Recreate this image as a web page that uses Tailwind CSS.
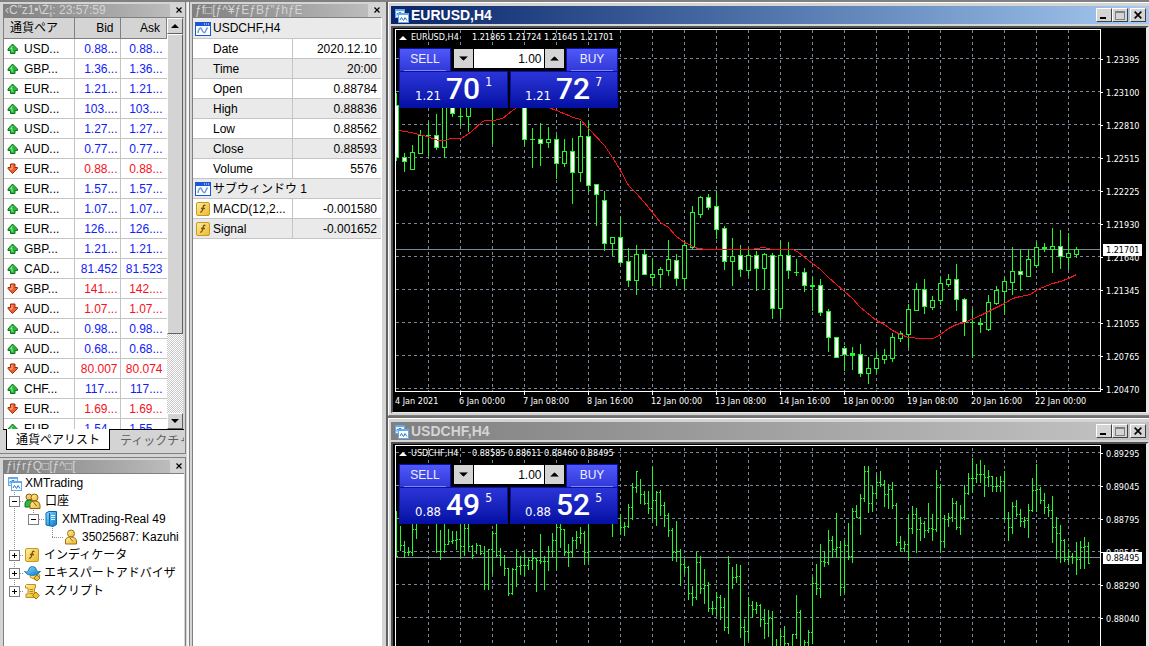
<!DOCTYPE html>
<html lang="ja">
<head>
<meta charset="utf-8">
<title>XMTrading</title>
<script src="https://cdn.jsdelivr.net/npm/@tailwindcss/browser@4"></script>
</head>
<body class="flex h-screen overflow-hidden bg-[#d4d4d4] border-t-2 border-[#808080] font-['Liberation_Sans','Noto_Sans_CJK_JP',sans-serif] text-[12px] leading-[20px] text-black">

<svg class="absolute h-0 w-0">
  <defs>
    <linearGradient id="gold" x1="0" y1="0" x2="1" y2="1"><stop offset="0" stop-color="#fff0a0"/><stop offset="1" stop-color="#e8b830"/></linearGradient>
    <linearGradient id="sky" x1="0" y1="0" x2="1" y2="1"><stop offset="0" stop-color="#8cdcff"/><stop offset="1" stop-color="#0878c8"/></linearGradient>
    <symbol id="up" viewBox="0 0 12 12"><path d="M5.5 1 L10.5 6 V7.5 H8 V10.5 H3.5 V7.5 H1 V6 Z" fill="#28b838" stroke="#107020"/><path d="M5.5 3 L3.5 5.5 H5 V9" fill="none" stroke="#90f098"/></symbol>
    <symbol id="down" viewBox="0 0 12 12"><path d="M5.5 10.5 L10.5 5.5 V4.5 H8 V1 H3.5 V4.5 H1 V5.5 Z" fill="#f06030" stroke="#a02808"/><path d="M5 2 V6 H3" fill="none" stroke="#ffb890"/></symbol>
    <symbol id="wave" viewBox="0 0 16 14"><rect x=".5" y=".5" width="15" height="13" fill="#fff" stroke="#1858d8"/><rect x="1" y="1" width="14" height="3" fill="#1858d8"/><path d="M9 2h1M11 2h1M13 2h1" stroke="#fff"/><path d="M3 11 C4 5 6 5 7 8 S10 12 11 8 L12.500 5.500" fill="none" stroke="#7098d8" stroke-width="1.500"/></symbol>
    <symbol id="func" viewBox="0 0 14 14"><rect x=".5" y=".5" width="13" height="13" rx="1.500" fill="url(#gold)" stroke="#c89820"/><path d="M9.500 3.500 C7.500 2.500 7.200 4.500 7 6 S6.400 10.500 4 10.200 M5 6.500 H9" fill="none" stroke="#805008" stroke-width="1.300"/></symbol>
    <symbol id="charts" viewBox="0 0 15 15"><rect x="1.500" y="1.500" width="9" height="8" fill="#e8f4ff" stroke="#68a8e8"/><path d="M1 2.500H11" stroke="#68a8e8"/><path d="M3 7.500V5.500H5V4.500H7V6.500H9" fill="none" stroke="#3888d8"/><rect x="4.500" y="5.500" width="10" height="9" fill="#fff" stroke="#68a8e8"/><path d="M4 6.500H15" stroke="#68a8e8"/><path d="M6 12 L7.500 9.500 L9.500 12.500 L11 9.500 L13 12.500" fill="none" stroke="#2878c8"/></symbol>
    <symbol id="users" viewBox="0 0 16 16"><circle cx="4.500" cy="4" r="3" fill="#f8c870" stroke="#906010"/><path d="M.5 14 V10 Q1 7 5 7 L8 8 V14 Z" fill="#30b840" stroke="#107820"/><circle cx="10" cy="4.500" r="3.500" fill="url(#gold)" stroke="#906010"/><path d="M5.500 15.500 V11 Q6 8 10.500 8 Q15 8 15.500 12 V15.500 Z" fill="url(#gold)" stroke="#906010"/><path d="M9 9 L12 13" stroke="#906010"/></symbol>
    <symbol id="user" viewBox="0 0 14 16"><circle cx="7" cy="4.500" r="3.500" fill="url(#gold)" stroke="#a07010"/><path d="M1.500 15 V11 Q2 8 7 8 Q12 8 12.500 12 V15 Z" fill="url(#gold)" stroke="#a07010"/><path d="M6 9 L9 12.500" stroke="#a07010"/></symbol>
    <symbol id="server" viewBox="0 0 12 16"><path d="M1 2 L4 .5 H11.500 V13.500 L8 15.500 L1 14 Z" fill="url(#sky)" stroke="#0868b0"/><path d="M4.500 2 V14.500" stroke="#0868b0"/><path d="M6 4.500H10M6 6.500H10M6 8.500H10" stroke="#e0f8ff"/></symbol>
    <symbol id="hat" viewBox="0 0 17 15"><path d="M7 8 L14 7 L16 10 L12 14 L6 11 Z" fill="url(#gold)" stroke="#c09020"/><path d="M.5 5.500 Q4 7 4.500 4 Q5 .5 8.500 .5 Q12 .5 12.500 4 Q13 6.500 16.500 5.500 Q14 9.500 8.500 9.500 Q3 9.500 .5 5.500Z" fill="url(#sky)" stroke="#2080b8"/><path d="M13 9 L16 12 L13 15 L10 12Z" fill="#f0c030" stroke="#a07810"/></symbol>
    <symbol id="scroll" viewBox="0 0 16 15"><path d="M2.500 .5 H11.500 V4 H10.500 V10 H12 V13.500 H2 V10 H4 V4 H1.500 V1.500Z" fill="url(#gold)" stroke="#c09020"/><path d="M5.500 5.500H9M5.500 7.500H9M5.500 9.500H9" stroke="#b88818"/><path d="M12 8 L15.500 11.500 L12 15 L8.500 11.500Z" fill="#f0c030" stroke="#a07810"/></symbol>
    <symbol id="plus" viewBox="0 0 11 11"><rect x=".5" y=".5" width="10" height="10" fill="#fff" stroke="#808080"/><path d="M3 5.500H8M5.500 3V8" stroke="#000"/></symbol>
    <symbol id="minus" viewBox="0 0 11 11"><rect x=".5" y=".5" width="10" height="10" fill="#fff" stroke="#808080"/><path d="M3 5.500H8" stroke="#000"/></symbol>
    <symbol id="x" viewBox="0 0 6 6"><path d="M.5 .5L5.500 5.500M5.500 .5L.5 5.500" stroke="#000" stroke-width="1.200"/></symbol>
    <symbol id="tu" viewBox="0 0 8 4"><path d="M0 4L4 0L8 4Z" fill="currentColor"/></symbol>
    <symbol id="td" viewBox="0 0 8 4"><path d="M0 0L4 4L8 0Z" fill="currentColor"/></symbol>
  </defs>
</svg>

<aside class="flex w-[189px] shrink-0 flex-col overflow-hidden border-r-2 border-white border-r-[#f4f4f4]">
  <section class="flex w-[186px] shrink-0 flex-col border-r border-b border-[#808080] pt-px pr-px pl-[3px]">
    <header class="flex h-[14px] items-center">
      <h2 class="h-[13px] w-[167px] overflow-hidden whitespace-nowrap bg-linear-to-r from-[#808080] to-[#bcbcbc] pl-[2px] leading-[13px] text-[#d4d4d4]">‹C”z1•\Ž¦: 23:57:59</h2>
      <button aria-label="閉じる" class="mr-px ml-auto flex h-3 w-2 items-center justify-center"><svg class="h-[6px] w-[6px]"><use href="#x"/></svg></button>
    </header>
    <div class="flex h-[412px] overflow-hidden border-t border-l border-[#808080] pr-px">
      <div class="min-w-0 flex-1 overflow-hidden bg-white">
        <table class="w-full table-fixed border-collapse">
          <thead><tr class="h-[20px] bg-[#d4d4d4]">
            <th class="h-[20px] w-[70px] border-r border-b border-[#808080] pt-[2px] pl-[6px] text-left font-normal whitespace-nowrap leading-[17px]">通貨ペア</th>
            <th class="w-[46px] border-r border-b border-[#808080] pt-[2px] pr-[6px] text-right font-normal leading-[17px]">Bid</th>
            <th class="border-r border-b border-[#808080] pt-[2px] pr-[6px] text-right font-normal leading-[17px]">Ask</th>
          </tr></thead>
          <tbody id="quotes"></tbody>
        </table>
      </div>
      <div class="flex w-[16px] flex-col bg-[repeating-conic-gradient(#fff_0_25%,#c8c8c8_0_50%)] bg-[length:2px_2px]">
        <button aria-label="上へ" class="flex h-[16px] shrink-0 items-center justify-center border border-t-white border-r-[#606060] border-b-[#606060] border-l-white bg-[#d4d4d4]"><svg class="h-[4px] w-[8px]"><use href="#tu"/></svg></button>
        <div class="h-[300px] border border-t-white border-r-[#606060] border-b-[#606060] border-l-white bg-[#d4d4d4]"></div>
        <button aria-label="下へ" class="mt-auto flex h-[16px] shrink-0 items-center justify-center border border-t-white border-r-[#606060] border-b-[#606060] border-l-white bg-[#d4d4d4]"><svg class="h-[4px] w-[8px]"><use href="#td"/></svg></button>
      </div>
    </div>
    <nav class="flex h-[24px] overflow-hidden">
      <div class="w-[3px] border-t border-black"></div>
      <button class="h-[21px] w-[104px] shrink-0 border border-t-0 border-black bg-white pt-[2px] leading-[18px] whitespace-nowrap">通貨ペアリスト</button>
      <button class="h-[21px] flex-1 overflow-hidden border-t border-black pt-px pl-[10px] text-left leading-[18px] whitespace-nowrap text-[#606060]">ティックチャート</button>
    </nav>
  </section>
  <section class="mt-[3px] flex w-[186px] flex-1 flex-col border-t border-r border-[#808080] pt-px pr-px pl-[3px]">
    <header class="flex h-[14px] items-center">
      <h2 class="h-[13px] w-[167px] overflow-hidden whitespace-nowrap bg-linear-to-r from-[#808080] to-[#bcbcbc] pl-[3px] leading-[13px] text-[#d4d4d4]">ƒiƒrƒQ□[ƒ^□[</h2>
      <button aria-label="閉じる" class="mr-px ml-auto flex h-3 w-2 items-center justify-center"><svg class="h-[6px] w-[6px]"><use href="#x"/></svg></button>
    </header>
    <div class="relative flex-1 overflow-hidden border-t border-l border-[#808080] bg-white leading-[18px] whitespace-nowrap">
      <svg class="absolute top-0 left-0 h-[130px] w-[80px]" shape-rendering="crispEdges"><path d="M10.500 18V117M10 27.500H20M29.500 36V45M29 45.500H40M48.500 54V63M48 63.500H60M10 81.500H20M10 99.500H20M10 117.500H20" fill="none" stroke="#909090" stroke-dasharray="1 1"/></svg>
      <ul class="relative">
        <li class="flex h-[18px] items-center gap-[3px] pl-[3px]"><svg class="h-[15px] w-[15px]"><use href="#charts"/></svg>XMTrading</li>
        <li class="flex h-[18px] items-center pl-[5px]"><svg class="h-[11px] w-[11px]"><use href="#minus"/></svg><svg class="mr-[4px] ml-[4px] h-[16px] w-[17px]"><use href="#users"/></svg>口座</li>
        <li class="flex h-[18px] items-center pl-[24px]"><svg class="h-[11px] w-[11px]"><use href="#minus"/></svg><svg class="mr-[5px] ml-[6px] h-[16px] w-[12px]"><use href="#server"/></svg>XMTrading-Real 49</li>
        <li class="flex h-[18px] items-center gap-[4px] pl-[60px]"><svg class="h-[16px] w-[14px] shrink-0"><use href="#user"/></svg>35025687: Kazuhi</li>
        <li class="flex h-[18px] items-center pl-[5px]"><svg class="h-[11px] w-[11px]"><use href="#plus"/></svg><svg class="mr-[5px] ml-[5px] h-[14px] w-[14px]"><use href="#func"/></svg>インディケータ</li>
        <li class="flex h-[18px] items-center pl-[5px]"><svg class="h-[11px] w-[11px] shrink-0"><use href="#plus"/></svg><svg class="mr-[3px] ml-[4px] h-[15px] w-[17px] shrink-0"><use href="#hat"/></svg>エキスパートアドバイザ</li>
        <li class="flex h-[18px] items-center pl-[5px]"><svg class="h-[11px] w-[11px]"><use href="#plus"/></svg><svg class="mr-[4px] ml-[4px] h-[15px] w-[16px]"><use href="#scroll"/></svg>スクリプト</li>
      </ul>
    </div>
  </section>
</aside>

<section class="flex w-[197px] shrink-0 flex-col border-l border-[#808080] pt-px pr-[2px] pl-[2px]">
  <header class="flex h-[14px] items-center">
    <h2 class="h-[13px] w-[176px] overflow-hidden whitespace-nowrap bg-linear-to-r from-[#808080] to-[#bcbcbc] pl-[3px] leading-[13px] text-[#d4d4d4]">ƒf□[ƒ^¥ƒEƒBƒ”ƒhƒE</h2>
    <button aria-label="閉じる" class="mr-[3px] ml-auto flex h-3 w-2 items-center justify-center"><svg class="h-[6px] w-[6px]"><use href="#x"/></svg></button>
  </header>
  <div class="mr-[2px] flex-1 overflow-hidden border-t border-l border-[#808080] border-r border-r-white bg-white">
    <table class="w-full table-fixed border-collapse">
      <colgroup><col class="w-[99px]"><col></colgroup>
      <tbody id="values"></tbody>
    </table>
  </div>
</section>

<main id="desk" class="flex min-w-0 flex-1 flex-col gap-[2px] overflow-hidden border-l-2 border-[#606060] bg-[#707070]"></main>

<template id="win">
  <article class="flex shrink-0 flex-col border border-t-white border-r-0 border-b-[#808080] border-l-white bg-[#d4d4d4] pt-[3px] pb-[2px] pl-[2px]">
    <header class="mb-[2px] flex h-[18px] items-center pr-[3px] pl-[3px]" data-bar>
      <svg class="mr-[2px] h-[15px] w-[15px]"><use href="#charts"/></svg>
      <h1 class="text-[14px] font-bold leading-[18px]" data-title></h1>
      <button aria-label="最小化" class="ml-auto flex h-[14px] w-[16px] items-end border border-t-white border-r-[#404040] border-b-[#404040] border-l-white bg-[#d4d4d4] pb-[2px] pl-[3px]"><span class="h-[2px] w-[6px] bg-black"></span></button>
      <button aria-label="最大化" class="flex h-[14px] w-[16px] items-center justify-center border border-t-white border-r-[#404040] border-b-[#404040] border-l-white bg-[#d4d4d4]"><span class="h-[9px] w-[10px] border border-t-2 border-[#808080]"></span></button>
      <button aria-label="閉じる" class="ml-[2px] flex h-[14px] w-[16px] items-center justify-center border border-t-white border-r-[#404040] border-b-[#404040] border-l-white bg-[#d4d4d4]"><svg class="h-[8px] w-[8px]"><use href="#x"/></svg></button>
    </header>
    <div class="flex border-t-2 border-r-3 border-b border-l-2 border-t-[#505050] border-r-[#e8e8e8] border-b-[#e8e8e8] border-l-[#505050] bg-black pt-px pl-[2px] font-['DejaVu_Sans_Condensed','Liberation_Sans',sans-serif] text-[9px] text-white">
      <div class="min-w-0 flex-1">
        <div class="relative h-[363px] overflow-hidden border border-white">
          <svg class="block h-[361px] w-full" preserveAspectRatio="xMinYMin slice" shape-rendering="crispEdges" data-plot></svg>
          <p class="absolute top-[2px] left-[3px] flex items-center leading-[11px] whitespace-nowrap"><svg class="mr-[4px] h-[4px] w-[8px]"><use href="#tu"/></svg><span class="w-[61px]" data-name></span><span data-ohlc></span></p>
          <form class="absolute top-[18px] left-[3px] w-[219px] bg-black font-['Liberation_Sans',sans-serif] text-[12px]">
            <div class="flex h-[23px] justify-between">
              <button type="button" class="w-[52px] border border-b-0 border-[#0810a8] bg-linear-to-b from-[#5058f8] to-[#3038d8] px-[4px] text-[#f0f0ff]"><span class="block border-b border-[#8088ff] leading-[21px]">SELL</span></button>
              <div class="flex gap-px py-[1px]">
                <button type="button" aria-label="減らす" class="flex h-[19px] w-[19px] items-center justify-center bg-[#d4d4d4] text-black"><svg class="h-[5px] w-[9px]" viewBox="0 0 8 4"><use href="#td"/></svg></button>
                <input aria-label="数量" value="1.00" class="h-[19px] w-[70px] bg-white pr-[2px] text-right text-[12px] text-black outline-none">
                <button type="button" aria-label="増やす" class="flex h-[19px] w-[19px] items-center justify-center bg-[#d4d4d4] text-black"><svg class="h-[5px] w-[9px]" viewBox="0 0 8 4"><use href="#tu"/></svg></button>
              </div>
              <button type="button" class="w-[52px] border border-b-0 border-[#0810a8] bg-linear-to-b from-[#5058f8] to-[#3038d8] px-[4px] text-[#f0f0ff]"><span class="block border-b border-[#8088ff] leading-[21px]">BUY</span></button>
            </div>
            <div class="flex h-[37px] gap-[2px] font-['DejaVu_Sans_Condensed','Liberation_Sans',sans-serif]">
              <div class="flex flex-1 items-end border border-[#0810a8] bg-linear-to-b from-[#2c34d8] to-[#0410a4] pl-[15px] text-[13px]" data-sell></div>
              <div class="flex flex-1 items-end border border-[#0810a8] bg-linear-to-b from-[#2c34d8] to-[#0410a4] pl-[14px] text-[13px]" data-buy></div>
            </div>
          </form>
        </div>
        <ol class="flex h-[20px] overflow-hidden leading-[18px] whitespace-nowrap" data-dates></ol>
      </div>
      <div class="relative w-[45px] shrink-0 overflow-hidden">
        <ol class="absolute inset-x-0" data-prices></ol>
        <output class="absolute left-[2px] h-[12px] w-[39px] bg-white pl-[3px] leading-[12px] text-black" data-now></output>
      </div>
    </div>
  </article>
</template>

<script>
const quotes = `u USD 0.88... 0.88...|u GBP 1.36... 1.36...|u EUR 1.21... 1.21...|u USD 103.... 103....|u USD 1.27... 1.27...|u AUD 0.77... 0.77...|d EUR 0.88... 0.88...|u EUR 1.57... 1.57...|u EUR 1.07... 1.07...|u EUR 126.... 126....|u GBP 1.21... 1.21...|u CAD 81.452 81.523|d GBP 141.... 142....|d AUD 1.07... 1.07...|u AUD 0.98... 0.98...|u AUD 0.68... 0.68...|d AUD 80.007 80.074|u CHF 117.... 117....|d EUR 1.69... 1.69...|u EUR 1.54... 1.55...`.split('|');
document.getElementById('quotes').innerHTML = quotes.map(q => {
  const [d, s, b, a] = q.split(' ');
  const c = d === 'u' ? 'text-[#1020f8]' : 'text-[#f81020]';
  return `<tr class="h-[20px]"><td class="h-[20px] border-r border-b border-[#c4c4c4] pt-[2px] pl-[3px] leading-[17px]"><span class="flex items-center gap-[5px]"><svg class="h-[12px] w-[12px]"><use href="#${d === 'u' ? 'up' : 'down'}"/></svg>${s}...</span></td><td class="border-r border-b border-[#c4c4c4] pt-[2px] pr-[2px] text-right leading-[17px] ${c}">${b}</td><td class="border-b border-[#c4c4c4] pt-[2px] pr-[4px] text-right leading-[17px] ${c}">${a}</td></tr>`;
}).join('');

const values = [['wave','USDCHF,H4'],['','Date','2020.12.10'],['','Time','20:00'],['','Open','0.88784'],['','High','0.88836'],['','Low','0.88562'],['','Close','0.88593'],['','Volume','5576'],['wave','サブウィンドウ 1'],['func','MACD(12,2...','-0.001580'],['func','Signal','-0.001652']];
document.getElementById('values').innerHTML = values.map(([i, k, v], n) => {
  const bg = n % 2 ? 'bg-white' : 'bg-[#eaeaea]';
  const icon = i === 'wave' ? '<svg class="mr-[2px] ml-[2px] h-[14px] w-[16px]"><use href="#wave"/></svg>' : i ? '<svg class="mr-[3px] ml-[3px] h-[14px] w-[14px]"><use href="#func"/></svg>' : '<span class="w-[20px]"></span>';
  const cell = `<span class="flex items-center whitespace-nowrap">${icon}${k}</span>`;
  return `<tr class="${bg}">` + (v ? `<td class="h-[20px] border-r border-b border-[#c4c4c4] pt-[2px] leading-[17px]">${cell}</td><td class="border-b border-[#c4c4c4] pt-[2px] pr-[4px] text-right leading-[17px]">${v}</td>` : `<td colspan="2" class="h-[20px] border-b border-[#c4c4c4] pt-[2px] leading-[17px]">${cell}</td>`) + '</tr>';
}).join('');

// x, kind (w filled, h hollow, d flat), body top, body bottom, high, low
const candles = `396w105,157,93,160 404w157,161,153,171 412h152,169,145,169 420h135,153,130,153 428d135,135,122,155 436w135,147,114,149 444h100,147,100,157 452w100,113,100,116 460d116,116,105,125 468h100,116,100,131 492d100,100,100,143 524w100,139,100,145 532d139,139,128,167 540w139,143,123,165 548h139,142,127,147 556w139,163,135,178 564h151,163,139,166 572w151,172,138,203 580h136,172,121,181 588w136,185,122,191 596w184,194,184,225 604w200,243,191,250 612h237,243,237,255 620w237,262,217,263 628w261,280,248,286 636h254,280,245,294 644w254,274,249,274 652h274,277,259,285 660h269,274,267,287 668h259,270,240,275 676w260,278,254,285 684h245,278,241,288 692h212,247,206,248 700h197,214,196,217 708w197,207,194,209 716w206,229,191,238 724w228,261,226,269 732h256,261,238,285 740w255,269,245,276 748h255,270,248,275 756w255,268,251,290 764h254,268,253,289 772w255,308,253,318 780h255,308,241,317 788w255,270,242,278 796d272,272,259,275 804w272,285,268,291 812d285,286,277,310 820w285,312,279,315 828w311,337,309,351 836w337,357,337,357 844w348,354,346,370 852d353,355,347,369 860w354,373,344,376 868h368,373,357,383 876h358,368,351,372 884h355,359,349,363 892h337,358,333,361 900h333,338,331,341 908h309,334,304,347 916h289,310,283,310 924w289,306,279,313 932h300,307,296,309 940h283,300,277,304 948h279,284,274,286 956w279,299,264,310 964w299,322,298,335 972d322,322,309,357 980d323,324,318,332 988h302,329,295,330 996h290,303,286,304 1004h281,291,277,314 1012h271,282,247,294 1020w271,274,250,290 1028h259,276,250,276 1036h247,265,242,267 1044d247,248,243,251 1052h246,249,228,272 1060w246,256,230,268 1068h253,257,233,269 1076h249,254,247,257`;
const average = '399,130 410,132 423,135 438,140 445,140 450,138 461,138 471,131 482,121 485,120 493,120 502,118 512,110 524,102 540,104 556,110 573,117 580,119 588,128 604,145 612,157 620,170 628,185 636,193 644,202 660,222 668,227 676,236 684,242 697,248 707,249 750,249 763,247 772,249 793,249 798,252 812,263 820,269 828,277 844,291 852,298 860,307 876,320 884,324 892,330 900,334 908,337 920,338 933,338 940,334 948,328 956,324 964,322 980,315 1004,303 1012,298 1020,296 1030,294 1037,289 1052,283 1060,281 1068,278 1076,274';
// x, high, low, close
const bars = `396,511,556,556 400,526,550,545 404,541,557,552 408,547,555,552 412,520,555,529 416,520,538,520 436,520,552,551 440,530,559,551 444,520,552,544 448,529,544,541 452,531,543,540 456,531,549,539 460,520,557,546 464,520,555,528 468,520,550,546 472,545,558,555 476,543,553,545 480,545,554,553 484,546,589,584 488,549,589,549 492,531,573,533 496,520,556,555 500,548,565,557 504,555,575,568 508,568,595,593 512,568,594,569 516,549,586,566 520,556,574,565 524,553,575,565 528,558,569,560 532,549,569,558 536,558,591,560 540,534,563,561 544,556,589,561 548,546,570,551 552,533,556,540 556,520,569,527 560,520,547,529 564,529,555,552 568,544,566,552 572,537,557,540 576,531,548,537 580,527,543,533 584,531,564,552 588,520,561,520 612,520,536,520 620,514,534,527 624,522,535,526 628,504,527,507 632,483,519,487 636,471,492,471 640,479,503,494 644,491,504,503 648,491,513,508 652,467,520,500 656,491,525,492 660,490,515,505 664,502,526,515 668,513,536,530 672,528,560,552 676,521,561,551 680,549,585,564 684,559,573,567 688,566,599,593 692,586,605,597 696,552,599,562 700,556,593,588 704,569,603,585 708,582,611,608 712,601,614,608 716,592,615,597 720,595,619,607 724,598,630,627 728,556,633,563 732,567,588,577 736,564,582,576 740,565,637,627 744,619,645,631 748,597,640,605 752,601,617,609 756,602,613,605 760,604,626,619 764,609,638,623 768,610,636,618 772,611,660,650 776,639,660,650 780,630,660,636 784,626,660,643 788,643,660,650 792,634,660,634 796,595,638,612 800,610,660,650 804,640,660,642 808,630,660,632 812,577,643,583 816,564,594,588 820,544,597,561 824,551,566,562 828,530,564,540 832,536,557,549 836,513,557,547 840,541,595,587 844,540,592,545 848,523,559,556 852,508,562,511 856,505,517,517 860,494,534,498 864,466,501,471 868,466,512,503 872,486,511,493 876,475,498,482 880,471,486,484 884,480,506,494 888,484,508,489 892,482,508,505 896,503,545,542 900,536,550,548 904,541,551,544 908,515,560,528 912,506,533,514 916,508,552,529 920,517,540,523 924,521,537,530 928,503,532,528 932,514,540,529 936,470,531,487 940,484,551,541 944,515,547,519 948,513,526,517 952,498,521,503 956,501,529,527 960,505,534,517 964,485,519,493 968,473,494,478 972,458,492,478 976,464,482,474 980,460,482,474 984,465,496,477 988,470,486,476 992,476,491,486 996,477,491,486 1000,476,491,481 1004,471,519,518 1008,512,540,527 1012,502,533,506 1016,500,516,514 1020,509,526,521 1024,517,527,520 1028,504,537,510 1032,478,511,490 1036,464,511,489 1040,487,503,500 1044,493,513,507 1048,504,516,510 1052,496,542,527 1056,517,558,533 1060,525,562,540 1064,539,561,559 1068,549,564,556 1072,553,563,557 1076,542,574,559 1080,541,568,547 1084,537,568,546 1088,542,563,563`;

function grid(y0, now) {
  let d = '';
  for (let x = 428; x < 1100; x += 32) d += `M${x + .5} ${y0 - 28}V${y0 + 333}`;
  for (let y = y0; y < y0 + 340; y += 33) d += `M396 ${y + .5}H1100`;
  return `<path d="${d}" stroke="#778899" stroke-dasharray="3 3" fill="none"/><path d="M396 ${now + .5}H1100" stroke="#778899"/>`;
}
function candleMarks() {
  let wick = '', hollow = '', filled = '', flat = '';
  for (const c of candles.split(' ')) {
    const [, xs, k, rest] = c.match(/^(\d+)([whd])(.*)$/);
    const x = +xs, [t, b, hi, lo] = rest.split(',').map(Number);
    wick += `M${x + .5} ${hi}V${lo + 1}`;
    if (k === 'd') flat += `M${x - 2} ${t}h5v${b - t + 1}h-5z`;
    else {
      const r = `M${x - 1.5} ${t + .5}h4v${Math.max(b - t, 2)}h-4z`;
      if (k === 'h') hollow += r; else filled += r;
    }
  }
  return `<g stroke="#20f828"><path d="${wick}"/><path d="${hollow}" fill="#000"/><path d="${filled}" fill="#fff"/></g><path d="${flat}" fill="#20f828"/><polyline points="${average}" transform="translate(.5 .5)" fill="none" stroke="#f81020"/>`;
}
function barMarks() {
  let d = '', prev = null;
  for (const b of bars.split(' ')) {
    const [x, hi, lo, c] = b.split(',').map(Number);
    d += `M${x + .5} ${hi}V${lo + 1}M${x + 1} ${c + .5}h1`;
    if (prev && prev[0] === x - 4 && prev[1] >= hi && prev[1] <= lo) d += `M${x - 1} ${prev[1] + .5}h1`;
    prev = [x, c];
  }
  return `<path d="${d}" stroke="#20f828" fill="none"/>`;
}
const dates = ['4 Jan 2021','6 Jan 00:00','7 Jan 08:00','8 Jan 16:00','12 Jan 00:00','13 Jan 08:00','14 Jan 16:00','18 Jan 00:00','19 Jan 08:00','20 Jan 16:00','22 Jan 00:00'];
const wins = [
  {name:'EURUSD,H4', ohlc:'1.21865 1.21724 1.21645 1.21701', bar:['bg-linear-to-r','from-[#0a246a]','to-[#a6caf0]','text-white'], y0:58, now:249, price:'1.21701', head:'1.21', sell:['70','1'], buy:['72','7'], marks:candleMarks, top:30, shift:'top-[14px]', nowTop:'top-[215px]', prices:['1.23395','1.23100','1.22810','1.22515','1.22225','1.21930','1.21640','1.21345','1.21055','1.20765','1.20470']},
  {name:'USDCHF,H4', ohlc:'0.88585 0.88611 0.88460 0.88495', bar:['bg-linear-to-r','from-[#808080]','to-[#c4c4c4]','text-[#d4d4d4]'], y0:452, now:557, price:'0.88495', head:'0.88', sell:['49','5'], buy:['52','5'], marks:barMarks, top:446, shift:'top-[-8px]', nowTop:'top-[107px]', prices:['0.89295','0.89045','0.88795','0.88545','0.88290','0.88040','0.87790']}
];
const quote = (h, [big, sup]) => `<span class="pb-[3px] leading-[17px]">${h}</span><span class="ml-[5px] self-start font-['Roboto','Liberation_Sans',sans-serif] text-[30px] leading-[34px] font-medium">${big}</span><span class="ml-[5px] self-start text-[12px] leading-[20px]">${sup}</span>`;
for (const w of wins) {
  const n = document.getElementById('win').content.cloneNode(true), q = s => n.querySelector(s);
  q('[data-bar]').classList.add(...w.bar);
  q('[data-title]').textContent = w.name;
  q('[data-name]').textContent = w.name;
  q('[data-ohlc]').textContent = w.ohlc;
  q('[data-plot]').setAttribute('viewBox', `396 ${w.top} 704 361`);
  q('[data-plot]').innerHTML = grid(w.y0, w.now) + w.marks();
  q('[data-sell]').innerHTML = quote(w.head, w.sell);
  q('[data-buy]').innerHTML = quote(w.head, w.buy);
  q('[data-dates]').innerHTML = dates.map((d, i) => `<li class="relative w-[64px] shrink-0">${i ? '<span class="absolute top-0 left-px h-[3px] w-px bg-white"></span>' : ''}${d}</li>`).join('');
  q('[data-prices]').classList.add(w.shift);
  q('[data-prices]').innerHTML = w.prices.map(p => `<li class="flex h-[33px] items-center gap-[3px]"><span class="h-px w-[2px] bg-white"></span>${p}</li>`).join('');
  q('[data-now]').classList.add(w.nowTop);
  q('[data-now]').textContent = w.price;
  document.getElementById('desk').append(n);
}
</script>
</body>
</html>
